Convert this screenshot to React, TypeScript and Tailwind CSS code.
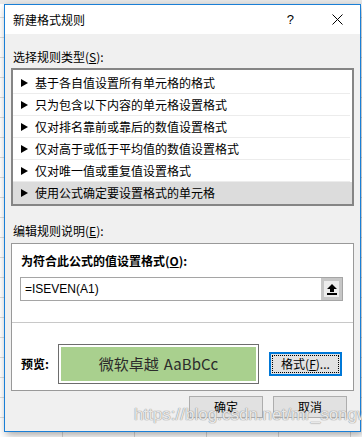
import React from "react";

const cjk = { fontFamily: '"Noto Sans CJK SC", "Noto Sans", sans-serif' };

function Tri() {
  return (
    <svg width="7" height="8" viewBox="0 0 7 8" className="shrink-0">
      <polygon points="0,0 7,4 0,8" fill="#000" />
    </svg>
  );
}

const items = [
  "基于各自值设置所有单元格的格式",
  "只为包含以下内容的单元格设置格式",
  "仅对排名靠前或靠后的数值设置格式",
  "仅对高于或低于平均值的数值设置格式",
  "仅对唯一值或重复值设置格式",
  "使用公式确定要设置格式的单元格",
];

export default function App() {
  return (
    <div
      className="relative w-[362px] h-[437px] overflow-hidden bg-white text-[12px] text-black"
      style={cjk}
    >
      {/* spreadsheet background */}
      <div className="absolute inset-0 bg-[repeating-linear-gradient(90deg,transparent_0px,transparent_62px,#d6d6d6_62px,#d6d6d6_63px,transparent_63px,transparent_72px),repeating-linear-gradient(0deg,transparent_0px,transparent_19px,#dcdcdc_19px,#dcdcdc_20px)]" />
      <div className="absolute left-0 top-0 w-full h-[4px] bg-[#e9e9e9]" />

      {/* dialog window */}
      <div className="absolute left-[4px] top-[4px] w-[357px] h-[428px] border border-[#1a7fd6] bg-[#f0f0f0] flex flex-col shadow-[2px_3px_8px_rgba(0,0,0,0.35)]">
        {/* title bar */}
        <div className="h-[29px] bg-white flex items-center pl-[8px] pr-[17px]">
          <span className="text-[12px] leading-[16px]">新建格式规则</span>
          <span className="ml-auto mr-[38px] text-[13px] leading-[16px]" style={{ fontFamily: '"Liberation Sans", sans-serif' }}>?</span>
          <svg width="11" height="11" viewBox="0 0 11 11">
            <path d="M0.5 0.5 L10.5 10.5 M10.5 0.5 L0.5 10.5" stroke="#000" strokeWidth="1" />
          </svg>
        </div>

        {/* body */}
        <div className="flex flex-col pt-[15px]">
          <div className="ml-[8px] leading-[16px]">
            选择规则类型(<span className="underline">S</span>):
          </div>
          <div className="ml-[6px] mt-[3px] w-[343px] border-2 border-[#858585] bg-white pt-[2px] flex flex-col">
            {items.map((t, i) => (
              <div
                key={i}
                className={
                  i === items.length - 1
                    ? "h-[22px] flex items-center pl-[8px] gap-[7px] bg-[#dcdcdc]"
                    : "h-[22px] flex items-center pl-[8px] gap-[7px] border-b border-[#ececec] mr-[2px]"
                }
              >
                <Tri />
                <span className="leading-[16px]">{t}</span>
              </div>
            ))}
          </div>

          <div className="ml-[8px] mt-[17px] leading-[16px]">
            编辑规则说明(<span className="underline">E</span>):
          </div>
          <div className="ml-[6px] mt-[4px] w-[343px] h-[148px] border border-[#999999] bg-white flex flex-col">
            <div className="pl-[9px] pt-[9px] font-bold leading-[16px]">
              为符合此公式的值设置格式(<span className="underline">O</span>):
            </div>
            <div className="ml-[8px] mt-[8px] w-[323px] h-[24px] border border-[#a5a5a5] flex items-center">
              <span className="pl-[4px] text-[12px]" style={{ fontFamily: '"Liberation Sans", Arial, sans-serif' }}>
                =ISEVEN(A1)
              </span>
              <div className="ml-auto w-[21px] h-[22px] bg-[#c6c6c6] p-[3px] flex">
                <div className="flex-1 bg-[#ececec] flex items-center justify-center">
                  <svg width="10" height="11" viewBox="0 0 10 11">
                    <polygon points="5,0 10,5 7,5 7,8 3,8 3,5 0,5" fill="#000" />
                    <rect x="0" y="9" width="10" height="2" fill="#000" />
                  </svg>
                </div>
              </div>
            </div>
            <div className="mt-[21px] h-[1px] bg-[#c8c8c8]" />
            <div className="mt-[21px] flex items-center pl-[9px]">
              <span className="font-bold leading-[16px] w-[37px]">预览:</span>
              <div className="w-[201px] h-[40px] border border-[#6d6d6d] bg-white p-[2px] flex">
                <div className="flex-1 bg-[#a9d08e] flex items-center justify-center text-[15px] text-[#2b2b2b] gap-[5px]">
                  <span>微软卓越</span>
                  <span>AaBbCc</span>
                </div>
              </div>
              <div className="ml-[10px] w-[73px] h-[24px] border-2 border-[#0078d7] bg-[#e1e1e1] p-[1px] flex">
                <div className="flex-1 border border-dotted border-black flex items-center justify-center leading-[16px]">
                  格式(<span className="underline">F</span>)...
                </div>
              </div>
            </div>
          </div>

          {/* buttons */}
          <div className="mt-[5px] flex justify-end gap-[10px] pr-[13px]">
            <div className="w-[74px] h-[22px] border border-[#adadad] bg-[#e1e1e1] flex items-center justify-center leading-[16px]">
              确定
            </div>
            <div className="w-[74px] h-[22px] border border-[#adadad] bg-[#e1e1e1] flex items-center justify-center leading-[16px]">
              取消
            </div>
          </div>
        </div>
      </div>

      {/* watermark */}
      <div
        className="absolute left-[134px] top-[404px] text-[17px] leading-[22px] text-white/80 [text-shadow:0_0_1px_#8a8a8a,0_0_1px_#8a8a8a]"
        style={{ fontFamily: '"Liberation Sans", Arial, sans-serif' }}
      >
        https://blog.csdn.net/mr_songw
      </div>
    </div>
  );
}
